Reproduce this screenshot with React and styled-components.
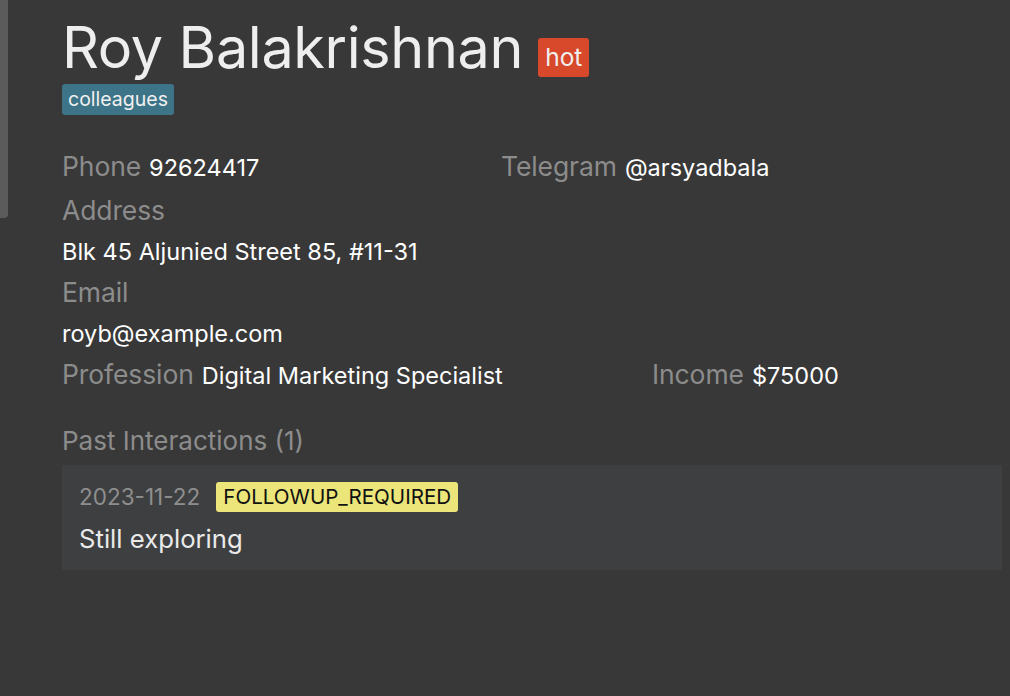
import React from "react";
import styled, { createGlobalStyle } from "styled-components";

const Global = createGlobalStyle`
  html, body { margin: 0; padding: 0; background: #383838; }
  body { font-family: Inter, "Noto Sans", sans-serif; }
`;

const Page = styled.div`
  position: relative;
  width: 1010px;
  height: 696px;
  background: #383838;
  overflow: hidden;
`;

const ScrollThumb = styled.div`
  position: absolute;
  left: 0;
  top: 0;
  width: 8px;
  height: 218px;
  background: #5b5b5b;
  border-radius: 0 0 4px 0;
`;

const Content = styled.div`
  display: flex;
  flex-direction: column;
  padding: 12px 8px 0 62px;
`;

const NameRow = styled.div`
  display: flex;
  align-items: flex-end;
  gap: 15px;
`;

const Name = styled.h1`
  margin: 0;
  font-size: 57.5px;
  font-weight: 400;
  color: #eeeeee;
  line-height: 70px;
  letter-spacing: -0.35px;
`;

const Badge = styled.span`
  display: inline-block;
  background: ${(p) => p.$bg};
  color: ${(p) => p.$fg || "#f0f0f0"};
  font-size: ${(p) => p.$size}px;
  line-height: ${(p) => p.$lh}px;
  padding: 0 ${(p) => p.$px}px;
  border-radius: 3px;
`;

const HotBadge = styled(Badge)`
  margin-bottom: 5px;
`;

const TagRow = styled.div`
  display: flex;
  margin-top: 2px;
  margin-bottom: 31px;
`;

const Pair = styled.div`
  display: flex;
  align-items: baseline;
  height: ${(p) => p.$h || 41}px;
`;

const Cell = styled.div`
  display: flex;
  align-items: baseline;
  gap: 8px;
  width: ${(p) => (p.$w ? `${p.$w}px` : "auto")};
  flex: none;
`;

const Label = styled.span`
  font-size: 26.5px;
  color: #8c8c8c;
  line-height: 41px;
  letter-spacing: -0.1px;
`;

const Value = styled.span`
  font-size: 23.5px;
  color: #ffffff;
  line-height: 41px;
`;

const Block = styled.div`
  display: flex;
  flex-direction: column;
`;

const SectionTitle = styled.div`
  margin-top: 30px;
  font-size: 26px;
  color: #8c8c8c;
  line-height: 32px;
`;

const Card = styled.div`
  margin-top: 8px;
  background: #3e3f41;
  padding: 17px 17px 15px;
  display: flex;
  flex-direction: column;
  gap: 11px;
`;

const CardHead = styled.div`
  display: flex;
  align-items: center;
  gap: 16px;
`;

const DateText = styled.span`
  font-size: 22.5px;
  color: #8e8e8e;
  line-height: 30px;
`;

const Note = styled.div`
  font-size: 25.7px;
  color: #eaeaea;
  line-height: 32px;
`;

export default function App() {
  return (
    <Page>
      <Global />
      <ScrollThumb />
      <Content>
        <NameRow>
          <Name>Roy Balakrishnan</Name>
          <HotBadge $bg="#d8492c" $size={24.5} $lh={39} $px={7}>hot</HotBadge>
        </NameRow>
        <TagRow>
          <Badge $bg="#3d7487" $size={19.5} $lh={31} $px={6}>colleagues</Badge>
        </TagRow>
        <Pair $h={44}>
          <Cell $w={439}>
            <Label>Phone</Label>
            <Value>92624417</Value>
          </Cell>
          <Cell>
            <Label>Telegram</Label>
            <Value>@arsyadbala</Value>
          </Cell>
        </Pair>
        <Block>
          <Label>Address</Label>
          <Value>Blk 45 Aljunied Street 85, #11-31</Value>
        </Block>
        <Block>
          <Label>Email</Label>
          <Value>royb@example.com</Value>
        </Block>
        <Pair>
          <Cell $w={590}>
            <Label>Profession</Label>
            <Value>Digital Marketing Specialist</Value>
          </Cell>
          <Cell>
            <Label>Income</Label>
            <Value>$75000</Value>
          </Cell>
        </Pair>
        <SectionTitle>Past Interactions (1)</SectionTitle>
        <Card>
          <CardHead>
            <DateText>2023-11-22</DateText>
            <Badge $bg="#ebe57a" $fg="#111111" $size={20.6} $lh={30} $px={7}>FOLLOWUP_REQUIRED</Badge>
          </CardHead>
          <Note>Still exploring</Note>
        </Card>
      </Content>
    </Page>
  );
}
